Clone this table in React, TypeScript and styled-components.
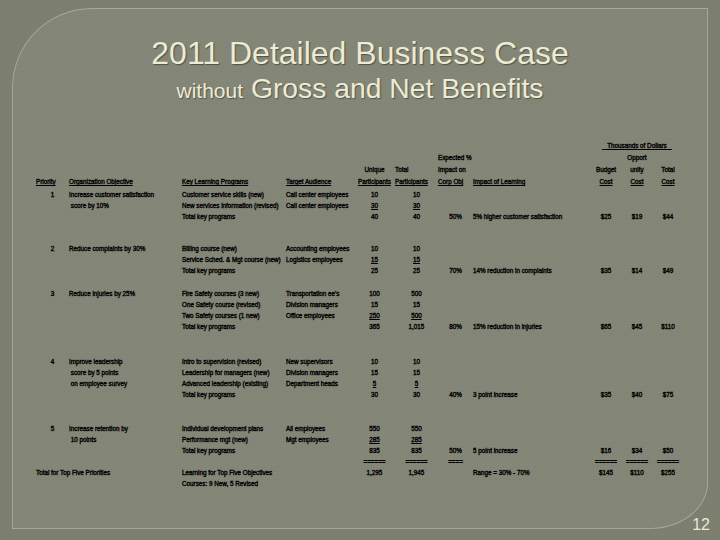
import React from 'react';
import styled, { createGlobalStyle } from 'styled-components';

type Align = 'left' | 'center' | 'right';

const COLS = '33px 113px 104px 68px 41px 43px 35px 117px 32px 30px 32px';
const HEAD_ALIGN: Align[] = ['left', 'left', 'left', 'left', 'center', 'left', 'left', 'left', 'center', 'center', 'center'];
const BODY_ALIGN: Align[] = ['center', 'left', 'left', 'left', 'center', 'center', 'center', 'left', 'center', 'center', 'center'];

// a leading "_" marks an underlined value
const headRows: string[][] = [
  ['', '', '', '', '', '', 'Expected %', '', '', 'Opport', ''],
  ['', '', '', '', 'Unique', 'Total', 'Impact on', '', 'Budget', 'unity', 'Total'],
  [
    '_Priority',
    '_Organization Objective',
    '_Key Learning Programs',
    '_Target Audience',
    '_Participants',
    '_Participants',
    '_Corp Obj',
    '_Impact of Learning',
    '_Cost',
    '_Cost',
    '_Cost',
  ],
];

const groups: { space: number; rows: string[][] }[] = [
  {
    space: 1,
    rows: [
      ['1', 'Increase customer satisfaction', 'Customer service skills (new)', 'Call center employees', '10', '10'],
      ['', '\u00a0score by 10%', 'New services information (revised)', 'Call center employees', '_30', '_30'],
      ['', '', 'Total key programs', '', '40', '40', '50%', '5% higher customer satisfaction', '$25', '$19', '$44'],
    ],
  },
  {
    space: 21,
    rows: [
      ['2', 'Reduce complaints by 30%', 'Billing course (new)', 'Accounting employees', '10', '10'],
      ['', '', 'Service Sched. & Mgt course (new)', 'Logistics employees', '_15', '_15'],
      ['', '', 'Total key programs', '', '25', '25', '70%', '14% reduction in complaints', '$35', '$14', '$49'],
    ],
  },
  {
    space: 12,
    rows: [
      ['3', 'Reduce injuries by 25%', 'Fire Safety courses (3 new)', "Transportation ee's", '100', '500'],
      ['', '', 'One Safety course (revised)', 'Division managers', '15', '15'],
      ['', '', 'Two Safety courses (1 new)', 'Office employees', '_250', '_500'],
      ['', '', 'Total key programs', '', '365', '1,015', '80%', '15% reduction in injuries', '$65', '$45', '$110'],
    ],
  },
  {
    space: 24,
    rows: [
      ['4', 'Improve leadership', 'Intro to supervision (revised)', 'New supervisors', '10', '10'],
      ['', '\u00a0score by 5 points', 'Leadership for managers (new)', 'Division managers', '15', '15'],
      ['', '\u00a0on employee survey', 'Advanced leadership (existing)', 'Department heads', '_5', '_5'],
      ['', '', 'Total key programs', '', '30', '30', '40%', '3 point increase', '$35', '$40', '$75'],
    ],
  },
  {
    space: 23,
    rows: [
      ['5', 'Increase retention by', 'Individual development plans', 'All employees', '550', '550'],
      ['', '\u00a010 points', 'Performance mgt (new)', 'Mgt employees', '_285', '_285'],
      ['', '', 'Total key programs', '', '835', '835', '50%', '5 point increase', '$16', '$34', '$50'],
      ['', '', '', '', '======', '======', '====', '', '======', '======', '======'],
      ['', '', 'Learning for Top Five Objectives', '', '1,295', '1,945', '', 'Range = 30% - 70%', '$145', '$110', '$255'],
      ['', '', 'Courses: 9 New, 5 Revised'],
    ],
  },
];

const GlobalStyle = createGlobalStyle`
  html, body {
    margin: 0;
    padding: 0;
    background: #7c7e6f;
  }
`;

const Page = styled.div`
  position: relative;
  box-sizing: border-box;
  width: 720px;
  height: 540px;
  padding: 8px 12px 11px 12px;
  overflow: hidden;
  background-color: #7c7e6f;
  background-image: repeating-conic-gradient(#787a6b 0% 25%, #818374 0% 50%);
  background-size: 2px 2px;
  font-family: 'Liberation Sans', Arial, sans-serif;
`;

const Panel = styled.div`
  box-sizing: border-box;
  height: 100%;
  display: flex;
  flex-direction: column;
  padding: 26px 0 0 23px;
  border: 1px solid #a6a898;
  border-radius: 80px 0 58px 0 / 80px 0 46px 0;
  background-color: #858778;
  background-image: repeating-linear-gradient(0deg, rgba(0, 0, 0, 0.025) 0 1px, transparent 1px 2px);
`;

const Title = styled.h1`
  margin: 0 23px 0 0;
  font-size: 32px;
  line-height: 37px;
  font-weight: normal;
  text-align: center;
  color: #ecebd5;
  text-shadow: 1px 1px 1px rgba(40, 40, 30, 0.55);
`;

const Subtitle = styled.h2`
  margin: 1px 23px 0 0;
  font-size: 28.3px;
  line-height: 30px;
  font-weight: normal;
  text-align: center;
  color: #ecebd5;
  text-shadow: 1px 1px 1px rgba(40, 40, 30, 0.5);

  small {
    font-size: 21px;
  }
`;

const Table = styled.div`
  margin-top: 34px;
  color: #000;
  font-size: 6.3px;
  -webkit-text-stroke: 0.35px #000;
`;

const Group = styled.div<{ $space: number }>`
  margin-top: ${(p) => p.$space}px;
`;

const Row = styled.div<{ $h: number }>`
  display: grid;
  grid-template-columns: ${COLS};
  height: ${(p) => p.$h}px;
  line-height: ${(p) => p.$h}px;
`;

const Cell = styled.span<{ $align: Align; $u: boolean }>`
  white-space: nowrap;
  text-align: ${(p) => p.$align};
  text-decoration: ${(p) => (p.$u ? 'underline' : 'none')};
  text-decoration-thickness: 1px;
  text-underline-offset: 1px;
`;

const Thousands = styled.span`
  grid-column: 9 / span 3;
  text-align: center;
  text-decoration: underline;
  text-decoration-thickness: 1px;
  text-underline-offset: 1px;
  white-space: pre;
`;

const SlideNumber = styled.div`
  position: absolute;
  right: 10px;
  bottom: 7px;
  font-size: 16px;
  line-height: 16px;
  color: #e9e9d6;
`;

const TableRow = ({ cells, align, h }: { cells: string[]; align: Align[]; h: number }) => (
  <Row $h={h}>
    {align.map((a, i) => {
      const raw = cells[i] ?? '';
      const u = raw.startsWith('_');
      return (
        <Cell key={i} $align={a} $u={u}>
          {u ? raw.slice(1) : raw}
        </Cell>
      );
    })}
  </Row>
);

export default function App() {
  return (
    <>
      <GlobalStyle />
      <Page>
        <Panel>
          <Title>2011 Detailed Business Case</Title>
          <Subtitle>
            <small>without</small> Gross and Net Benefits
          </Subtitle>
          <Table>
            <Row $h={12}>
              <Thousands>{'   Thousands of Dollars   '}</Thousands>
            </Row>
            {headRows.map((r, i) => (
              <TableRow key={i} cells={r} align={HEAD_ALIGN} h={12} />
            ))}
            {groups.map((g, gi) => (
              <Group key={gi} $space={g.space}>
                {g.rows.map((r, ri) => {
                  const isTotal = r[2] === 'Learning for Top Five Objectives';
                  const cells = isTotal ? ['Total for Top Five Priorities', ...r.slice(1)] : r;
                  const align = isTotal ? (['left', ...BODY_ALIGN.slice(1)] as Align[]) : BODY_ALIGN;
                  return <TableRow key={ri} cells={cells} align={align} h={11} />;
                })}
              </Group>
            ))}
          </Table>
        </Panel>
        <SlideNumber>12</SlideNumber>
      </Page>
    </>
  );
}
